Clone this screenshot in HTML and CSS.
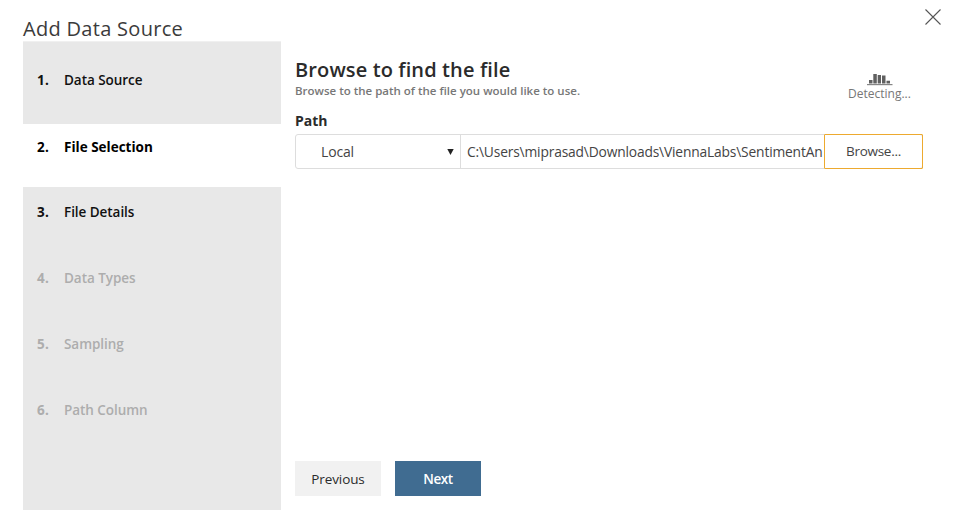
FILE: index.html
```html
<!DOCTYPE html>
<html lang="en">
<head>
<meta charset="utf-8">
<title>Add Data Source</title>
<link rel="stylesheet" href="styles.css">
</head>
<body>
<div class="dialog">
  <header class="titlebar">
    <h1 class="title">Add Data Source</h1>
    <button class="close" aria-label="Close"><svg width="16" height="16" viewBox="0 0 16 16"><path d="M.5.5l15 15M15.5.5l-15 15" fill="none" stroke="#555" stroke-width="1.1"/></svg></button>
  </header>
  <div class="columns">
    <ol class="steps">
      <li class="step first"><b>1.</b><span>Data Source</span></li>
      <li class="step current"><b>2.</b><span>File Selection</span></li>
      <li class="step"><b>3.</b><span>File Details</span></li>
      <li class="step disabled"><b>4.</b><span>Data Types</span></li>
      <li class="step disabled"><b>5.</b><span>Sampling</span></li>
      <li class="step disabled"><b>6.</b><span>Path Column</span></li>
    </ol>
    <main class="content">
      <div class="heading">
        <div>
          <h2>Browse to find the file</h2>
          <p class="hint">Browse to the path of the file you would like to use.</p>
        </div>
        <div class="status">
          <svg width="26" height="13" viewBox="0 0 26 13"><path d="M2 7h3.500v3.500H2zM6.300 1h3.500v9.500H6.300zM10.700 2h3.300v8.500h-3.300zM15 2.500h3.500v8H15zM19.500 7.700H23v2.800h-3.500z" fill="#606060"/><path d="M0 11h25.500v1.200H0z" fill="#858585"/></svg>
          <span>Detecting...</span>
        </div>
      </div>
      <div class="label">Path</div>
      <div class="picker">
        <div class="source"><span>Local</span><svg width="7" height="6" viewBox="0 0 7 6"><path d="M.3 0h6.400L3.500 6z" fill="#222"/></svg></div>
        <div class="path">C:\Users\miprasad\Downloads\ViennaLabs\SentimentAn</div>
        <button class="browse">Browse...</button>
      </div>
      <div class="actions">
        <button class="previous">Previous</button>
        <button class="next">Next</button>
      </div>
    </main>
  </div>
</div>
</body>
</html>
```
FILE: styles.css
```css
* { box-sizing: border-box; }
body { margin: 0; background: #fff; font: 14px/20px "Open Sans", "Noto Sans", sans-serif; color: #2b2b2b; }
h1, h2, p, ol { margin: 0; padding: 0; }
button { font: inherit; color: inherit; border: 0; padding: 0; background: none; }
.dialog { height: 525px; padding: 0 18px 15px 23px; display: flex; flex-direction: column; }
.titlebar { height: 41px; display: flex; justify-content: space-between; }
.title { font-size: 20px; font-weight: 400; letter-spacing: .3px; line-height: 28px; padding-top: 15px; color: #3b3b3b; white-space: nowrap; }
.close { width: 16px; height: 16px; margin-top: 9px; }
.close svg { display: block; }
.columns { flex: 1; display: flex; }
.steps { flex: none; width: 258px; list-style: none; background: #e8e8e8; border-top: 1px solid #f0f0f0; white-space: nowrap; }
.step { height: 66px; padding: 15px 0 0 14px; display: flex; font-size: 13.500px; letter-spacing: -.05px; font-weight: 600; color: #111; }
.step b { width: 27px; font-weight: 700; letter-spacing: .4px; }
.step.first { height: 82px; padding-top: 28px; }
.step.current { height: 63px; padding-top: 13px; letter-spacing: 0; background: #fff; font-weight: 700; color: #000; }
.step.disabled { color: #adadad; }
.content { flex: 1; min-width: 0; padding: 15px 18px 0 14px; display: flex; flex-direction: column; white-space: nowrap; }
.heading { height: 55px; display: flex; justify-content: space-between; }
h2 { font-size: 20px; font-weight: 600; letter-spacing: .12px; line-height: 28px; }
.hint { margin-top: -1px; font-size: 11.500px; font-weight: 600; line-height: 16px; color: #777; }
.status { width: 87px; padding-top: 17px; display: flex; flex-direction: column; align-items: center; font-size: 12px; line-height: 16px; color: #777; }
.status svg { display: block; }
.label { font-weight: 700; height: 23px; }
.picker { height: 35px; display: flex; border: 1px solid #ddd; border-radius: 3px; color: #444; width: 628px; }
.source { flex: none; width: 165px; padding: 0 6px 0 25px; border-right: 1px solid #ddd; display: flex; align-items: center; justify-content: space-between; }
.source span { letter-spacing: -.15px; }
.path { flex: 1; min-width: 0; padding-left: 6px; font-size: 13.800px; letter-spacing: -.17px; line-height: 33px; }
.browse { flex: none; width: 99px; margin: -1px; padding-bottom: 1px; border: 1.500px solid #edaa2f; border-radius: 1px; font-size: 13.500px; letter-spacing: -.3px; }
.actions { margin-top: auto; margin-bottom: 14px; display: flex; gap: 14px; }
.actions button { width: 86px; height: 35px; font-size: 13.500px; letter-spacing: -.1px; }
.actions .previous { background: #f1f1f1; }
.actions .next { background: #406c91; color: #fff; font-weight: 600; letter-spacing: -.4px; }
```
